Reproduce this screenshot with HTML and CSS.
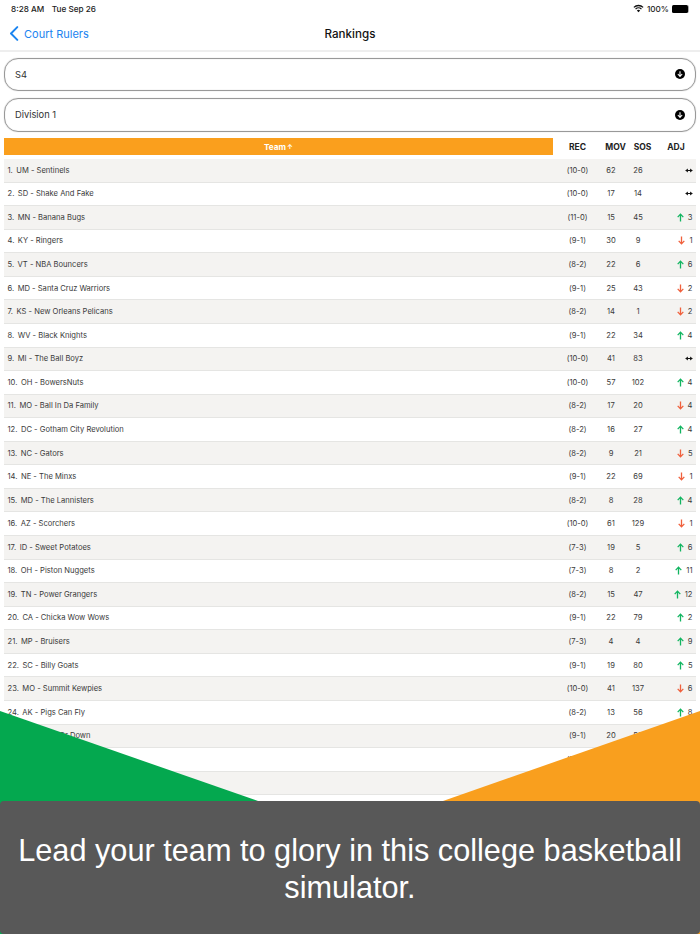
FILE: index.html
```html
<!DOCTYPE html>
<html lang="en">
<head>
<meta charset="utf-8">
<title>Rankings</title>
<link rel="stylesheet" href="styles.css">
</head>
<body>
<div class="page">
  <div class="status">
    <span class="status-left"><span>8:28 AM</span><span>Tue Sep 26</span></span>
    <span class="status-right">
      <svg class="wifi" viewBox="0 0 16 12" width="11" height="9"><path d="M8 11.5 5.6 8.9a3.4 3.4 0 0 1 4.8 0Z" fill="#111"/><path d="M3.7 6.9a6.1 6.1 0 0 1 8.6 0" fill="none" stroke="#111" stroke-width="1.9"/><path d="M1.3 4.4a9.6 9.6 0 0 1 13.4 0" fill="none" stroke="#111" stroke-width="1.9"/></svg>
      <span>100%</span>
      <span class="battery"><span class="battery-fill"></span></span>
    </span>
  </div>
  <header class="nav">
    <a class="back">
      <svg viewBox="0 0 10 16" width="10" height="15"><path d="M8.5 1.2 1.8 8l6.7 6.8" fill="none" stroke="#1a84f0" stroke-width="2.1" stroke-linecap="round" stroke-linejoin="round"/></svg>
      <span>Court Rulers</span>
    </a>
    <h1 class="title">Rankings</h1>
  </header>
  <div class="picker"><span>S4</span><svg class="picker-icon" viewBox="0 0 12 12" width="10" height="10"><circle cx="6" cy="6" r="6" fill="#000"/><path d="M6 2.6v5.8M3.4 6 6 8.8 8.6 6" fill="none" stroke="#fff" stroke-width="1.3"/></svg></div>
  <div class="picker"><span>Division 1</span><svg class="picker-icon" viewBox="0 0 12 12" width="10" height="10"><circle cx="6" cy="6" r="6" fill="#000"/><path d="M6 2.6v5.8M3.4 6 6 8.8 8.6 6" fill="none" stroke="#fff" stroke-width="1.3"/></svg></div>
  <div class="thead">
    <div class="th-team">Team<span class="sort">↑</span></div>
    <div class="th rec">REC</div><div class="th mov">MOV</div><div class="th sos">SOS</div><div class="th adj">ADJ</div>
  </div>
  <div class="rows" id="rows"></div>
  <svg class="wedges" viewBox="0 0 700 934" width="700" height="934"><polygon points="0,711 258,801 258,934 0,934" fill="#04a84f"/><polygon points="700,711 443,801 443,934 700,934" fill="#f99f1e"/></svg>
  <div class="caption">Lead your team to glory in this college basketball simulator.</div>
</div>
<script src="rows.js"></script>
</body>
</html>
```
FILE: rows.js
```js
var data = [
["1.","UM - Sentinels","(10-0)","62","26","=",""],
["2.","SD - Shake And Fake","(10-0)","17","14","=",""],
["3.","MN - Banana Bugs","(11-0)","15","45","u","3"],
["4.","KY - Ringers","(9-1)","30","9","d","1"],
["5.","VT - NBA Bouncers","(8-2)","22","6","u","6"],
["6.","MD - Santa Cruz Warriors","(9-1)","25","43","d","2"],
["7.","KS - New Orleans Pelicans","(8-2)","14","1","d","2"],
["8.","WV - Black Knights","(9-1)","22","34","u","4"],
["9.","MI - The Ball Boyz","(10-0)","41","83","=",""],
["10.","OH - BowersNuts","(10-0)","57","102","u","4"],
["11.","MO - Ball In Da Family","(8-2)","17","20","d","4"],
["12.","DC - Gotham City Revolution","(8-2)","16","27","u","4"],
["13.","NC - Gators","(8-2)","9","21","d","5"],
["14.","NE - The Minxs","(9-1)","22","69","d","1"],
["15.","MD - The Lannisters","(8-2)","8","28","u","4"],
["16.","AZ - Scorchers","(10-0)","61","129","d","1"],
["17.","ID - Sweet Potatoes","(7-3)","19","5","u","6"],
["18.","OH - Piston Nuggets","(7-3)","8","2","u","11"],
["19.","TN - Power Grangers","(8-2)","15","47","u","12"],
["20.","CA - Chicka Wow Wows","(9-1)","22","79","u","2"],
["21.","MP - Bruisers","(7-3)","4","4","u","9"],
["22.","SC - Billy Goats","(9-1)","19","80","u","5"],
["23.","MO - Summit Kewpies","(10-0)","41","137","d","6"],
["24.","AK - Pigs Can Fly","(8-2)","13","56","u","8"],
["25.","WV - Ups Or Down","(9-1)","20","58","d","1"],
["26.","","(10-0)","","","",""],
["27.","","","","","",""],
["28.","","","","","",""]
];
var up = '<svg class="arrow" viewBox="0 0 8 10" width="7" height="9"><path d="M4 9.5V1.5M.8 4.6 4 1.2l3.2 3.4" fill="none" stroke="#12b560" stroke-width="1.5"/></svg>';
var down = '<svg class="arrow" viewBox="0 0 8 10" width="7" height="9"><path d="M4 .5v8M.8 5.4 4 8.8l3.2-3.4" fill="none" stroke="#f0603c" stroke-width="1.5"/></svg>';
var same = '<svg class="same" viewBox="0 0 10 6" width="8" height="5"><path d="M1 3h8" stroke="#111" stroke-width="1.3"/><path d="M3.6.4 .4 3l3.2 2.6ZM6.4.4 9.6 3 6.4 5.6Z" fill="#111"/></svg>';
var html = "";
data.forEach(function (r) {
  var adj = r[5] === "=" ? same : r[5] ? (r[5] === "u" ? up : down) + '<span class="adj-n">' + r[6] + "</span>" : "";
  html += '<div class="row"><div class="team"><span>' + r[0] + "</span><span>" + r[1] + '</span></div><div class="c rec">' + r[2] + '</div><div class="c mov-v">' + r[3] + '</div><div class="c sos-v">' + r[4] + '</div><div class="adj-v">' + adj + "</div></div>";
});
document.getElementById("rows").innerHTML = html;
```
FILE: styles.css
```css
* { box-sizing: border-box; }
html, body { margin: 0; padding: 0; background: #fff; }
body { font-family: Inter, "Liberation Sans", sans-serif; color: #222; }
.page { position: relative; width: 700px; height: 934px; overflow: hidden; }
.status { height: 17px; padding: 0 11px; display: flex; justify-content: space-between; align-items: center; font-size: 8.2px; font-weight: 500; color: #222; }
.status-left { display: flex; gap: 7.5px; }
.status-right { display: flex; align-items: center; gap: 3px; }
.battery { width: 17px; height: 8px; border-radius: 2px; border-right: 1px solid #aaa; display: block; }
.battery-fill { display: block; height: 100%; background: #000; border-radius: 1.5px; }
.nav { position: relative; height: 35px; border-bottom: 2px solid #eee; display: flex; align-items: center; justify-content: center; }
.back { position: absolute; left: 9px; top: 9px; display: flex; align-items: center; gap: 5px; color: #1a84f0; font-size: 11px; }
.title { margin: 0; font-size: 11.6px; font-weight: 500; color: #111; }
.picker { height: 33.5px; margin: 5.5px 4px 7px; padding: 0 10px; border: 1px solid #999; border-radius: 14px; display: flex; align-items: center; justify-content: space-between; font-size: 9.3px; color: #333; box-shadow: 0 0 1px #bbb, inset 0 0 1px #bbb; }
.picker + .picker { margin-top: 0; margin-bottom: 6.5px; }
.thead { height: 17px; margin: 0 4px; display: flex; align-items: center; }
.th-team { flex: none; width: 549px; height: 17px; background: #fa9f1d; color: #fff; font-size: 8.2px; font-weight: 700; display: flex; align-items: center; justify-content: center; }
.sort { font-size: 6.5px; margin-left: 1px; }
.th { flex: none; font-size: 8.5px; font-weight: 700; color: #222; text-align: center; }
.th.rec { width: 49px; }
.th.mov { width: 27px; }
.th.sos { width: 27px; }
.th.adj { width: 40px; }
.rows { margin: 4px 4px 0; }
.row { height: 23.57px; display: flex; align-items: center; border-bottom: 1.5px solid #e5e5e3; font-size: 7.6px; color: #3a3a3a; }
.row:nth-child(odd) { background: #f4f3f1; }
.team { width: 549px; padding-left: 3.5px; display: flex; gap: 3.5px; }
.c { text-align: center; }
.row .rec { width: 49px; }
.mov-v { width: 18px; }
.sos-v { width: 36px; }
.adj-v { flex: 1; display: flex; justify-content: flex-end; align-items: center; gap: 4px; padding-right: 3.5px; }
.wedges { position: absolute; left: 0; top: 0; }
.caption { position: absolute; left: 0; right: 0; bottom: 0; height: 133px; padding: 31px 12px 0; background: #585858; border-radius: 4px; color: #fff; font-family: "Liberation Sans", sans-serif; font-size: 30.7px; line-height: 37px; text-align: center; }
```
